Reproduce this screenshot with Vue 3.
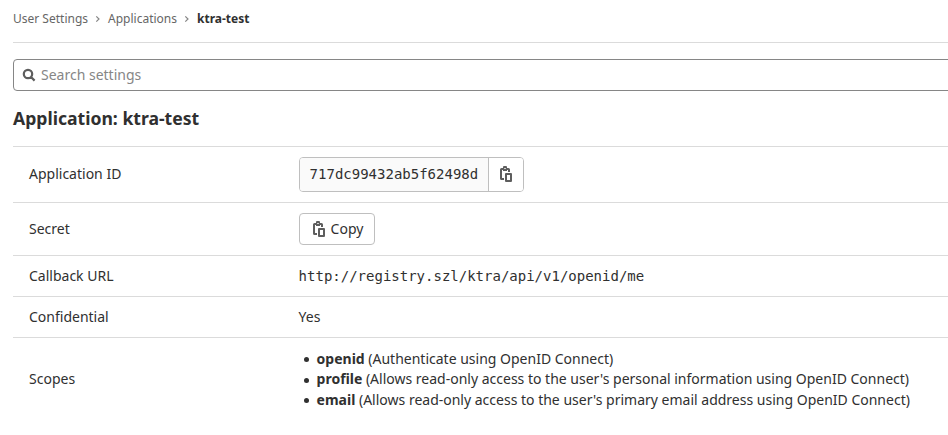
<script setup>
const crumbs = ['User Settings', 'Applications']
const clipboard = 'M5 1a1 1 0 0 1 1-1h2a1 1 0 0 1 1 1v1h1.500A1.500 1.500 0 0 1 12 3.500V6h-2V4H9v1H5V4H4v8h2v2H3.500A1.500 1.500 0 0 1 2 12.500v-9A1.500 1.500 0 0 1 3.500 2H5V1Zm1.300 1v1h1.400V2H6.300ZM8 7h5a1 1 0 0 1 1 1v7a1 1 0 0 1-1 1H8a1 1 0 0 1-1-1V8a1 1 0 0 1 1-1Zm1 2v5h3V9H9Z'
const scopes = [
  { name: 'openid', text: '(Authenticate using OpenID Connect)' },
  { name: 'profile', text: "(Allows read-only access to the user's personal information using OpenID Connect)" },
  { name: 'email', text: "(Allows read-only access to the user's primary email address using OpenID Connect)" },
]
</script>

<template>
  <main class="page">
    <nav class="crumbs">
      <template v-for="c in crumbs" :key="c">
        <a>{{ c }}</a>
        <svg class="chev" viewBox="0 0 8 8"><path d="M2.300 1.300 5 4 2.300 6.700" fill="none" stroke="#868686" stroke-width="1.200" /></svg>
      </template>
      <strong>ktra-test</strong>
    </nav>
    <div class="search">
      <svg viewBox="0 0 14 14"><path d="M9 9 12.600 12.600M10.200 6a4.200 4.200 0 1 1-8.400 0 4.200 4.200 0 0 1 8.400 0Z" fill="none" stroke="#5e5e5e" stroke-width="2.200" /></svg>
      <span>Search settings</span>
    </div>
    <h1>Application: ktra-test</h1>
    <section class="table">
      <div class="row r1">
        <div class="label">Application ID</div>
        <div class="group">
          <code>717dc99432ab5f62498d</code>
          <button class="icon-btn"><svg class="clip" viewBox="0 0 16 16"><path fill-rule="evenodd" :d="clipboard" /></svg></button>
        </div>
      </div>
      <div class="row r2">
        <div class="label">Secret</div>
        <button class="copy"><svg class="clip" viewBox="0 0 16 16"><path fill-rule="evenodd" :d="clipboard" /></svg>Copy</button>
      </div>
      <div class="row r3"><div class="label">Callback URL</div><code>http://registry.szl/ktra/api/v1/openid/me</code></div>
      <div class="row r4"><div class="label">Confidential</div><div>Yes</div></div>
      <div class="row r5">
        <div class="label">Scopes</div>
        <ul><li v-for="s in scopes" :key="s.name"><b>{{ s.name }}</b> {{ s.text }}</li></ul>
      </div>
    </section>
  </main>
</template>

<style>
body { overflow: hidden; background: #fff; }
</style>
<style scoped>
* { box-sizing: border-box; }
.page { width: 964px; padding-left: 13px; font: 14px/20px "Noto Sans", sans-serif; color: #303030; }
.crumbs { height: 43px; padding-top: 11px; display: flex; align-items: flex-start; font-size: 12px; line-height: 16px; color: #666; border-bottom: 1px solid #dbdbdb; }
.crumbs strong { color: #303030; }
.chev { width: 8px; height: 8px; margin: 4px 6px; }
.search { margin-top: 16px; height: 32px; border: 1px solid #868686; border-radius: 4px; display: flex; align-items: center; padding-left: 8px; gap: 5px; color: #868686; }
.search svg { width: 14px; height: 14px; }
h1 { margin: 16px 0; font-size: 17.6px; line-height: 23px; font-weight: 700; }
.row { display: flex; align-items: center; border-top: 1px solid #dbdbdb; padding-left: 16px; }
.label { width: 269.6px; flex: none; }
.r1 { height: 56px; } .r2 { height: 53px; } .r3, .r4 { height: 41px; } .r5 { height: 83px; }
.r1 .label { padding-bottom: 2px; }
code { font: 14px/20px "DejaVu Sans Mono", monospace; }
.group { display: flex; height: 35px; border: 1px solid #bfbfbf; border-radius: 4px; overflow: hidden; }
.group code { width: 188.6px; padding: 6px 0 0 10px; background: #fafafa; }
button { border: 0; background: #fff; padding: 0; font: inherit; color: inherit; }
.icon-btn { display: flex; width: 35px; padding: 8px 0 0 8.8px; border-left: 1px solid #bfbfbf; }
.clip { flex: none; width: 16px; height: 16px; display: block; fill: #5e5e5e; }
.copy { display: flex; align-items: center; gap: 3.6px; padding-left: 11.4px; height: 32px; width: 76px; border: 1px solid #bfbfbf; border-radius: 4px; }
ul { list-style: none; margin: 0; padding: 1px 0 0; white-space: nowrap; line-height: 20.4px; }
li { display: flex; align-items: center; }
li b { margin-right: 3.64px; }
li::before { content: ""; width: 5px; height: 5px; margin: 1px 7.6px 0 5.4px; border-radius: 50%; background: #303030; }
</style>
